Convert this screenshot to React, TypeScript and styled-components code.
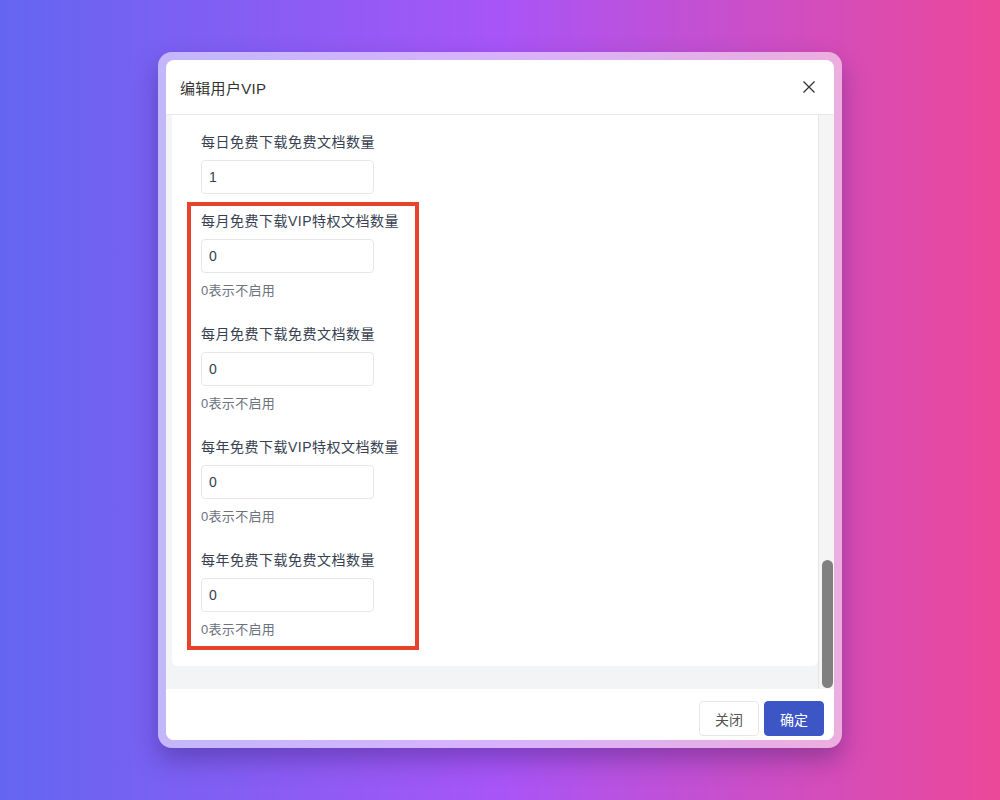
import React from "react";
import styled, { createGlobalStyle } from "styled-components";

const Global = createGlobalStyle`
  html, body { margin: 0; padding: 0; }
  body {
    width: 1000px;
    height: 800px;
    overflow: hidden;
    background: linear-gradient(90deg, #6366f1 0%, #a855f7 50%, #ec4899 100%);
    font-family: "Liberation Sans", "Noto Sans CJK SC", sans-serif;
  }
`;

const Page = styled.div`
  padding: 52px 0 0 158px;
`;

const Frame = styled.div`
  width: 668px;
  height: 680px;
  padding: 8px;
  border-radius: 14px;
  background: rgba(255, 255, 255, 0.55);
  box-shadow: 0 12px 24px rgba(40, 20, 90, 0.35);
`;

const Dialog = styled.div`
  width: 668px;
  height: 680px;
  background: #ffffff;
  border-radius: 8px;
  overflow: hidden;
  display: flex;
  flex-direction: column;
`;

const Header = styled.div`
  height: 54px;
  flex: none;
  display: flex;
  align-items: center;
  justify-content: space-between;
  padding: 0 18px 0 14px;
  border-bottom: 1px solid #e8e8ea;
`;

const Title = styled.div`
  font-size: 15px;
  color: #333333;
  letter-spacing: 0.3px;
`;

const CloseBtn = styled.button`
  width: 12px;
  height: 12px;
  padding: 0;
  border: none;
  background: none;
  display: flex;
  margin-right: 1px;
`;

const Body = styled.div`
  height: 574px;
  flex: none;
  display: flex;
  background: #f3f4f6;
  padding-left: 6px;
`;

const Card = styled.div`
  flex: 1;
  height: 551px;
  background: #ffffff;
  border-radius: 0 0 6px 6px;
  padding: 17px 15px 0 15px;
  box-sizing: border-box;
  overflow: hidden;
`;

const ScrollTrack = styled.div`
  width: 16px;
  flex: none;
  background: #f5f5f5;
  border-left: 1px solid #e6e6e6;
  box-sizing: border-box;
  display: flex;
  flex-direction: column;
  align-items: center;
`;

const ScrollThumb = styled.div`
  margin-top: auto;
  margin-bottom: 1px;
  margin-left: 1px;
  width: 11px;
  height: 128px;
  border-radius: 6px;
  background: #808080;
`;

const Item = styled.div<{ $indent?: boolean; $last?: boolean }>`
  margin-left: ${(p) => (p.$indent ? "14px" : "0")};
  margin-bottom: ${(p) => (p.$last ? "0" : "23px")};
`;

const Label = styled.div`
  font-size: 14px;
  line-height: 20px;
  color: #374151;
  margin-bottom: 8px;
  padding-top: 1px;
  margin-top: -1px;
  letter-spacing: 0.5px;
  white-space: nowrap;
`;

const Input = styled.input`
  display: block;
  width: 173px;
  height: 34px;
  box-sizing: border-box;
  border: 1px solid #e5e7eb;
  border-radius: 4px;
  padding: 0 7px;
  font-family: "Liberation Sans", "Noto Sans CJK SC", sans-serif;
  font-size: 14px;
  color: #374151;
  background: #ffffff;
  outline: none;
`;

const Hint = styled.div`
  margin-top: 8px;
  font-size: 13px;
  line-height: 20px;
  color: #6b7280;
  letter-spacing: 0.3px;
`;

const Highlight = styled.div`
  width: 232px;
  box-sizing: border-box;
  margin-top: 8px;
  border: 4px solid #e8432a;
  padding: 5px 10px 6px 10px;
`;

const Footer = styled.div`
  flex: 1;
  display: flex;
  justify-content: flex-end;
  align-items: flex-start;
  gap: 5px;
  padding: 12px 10px 0 0;
  background: #ffffff;
`;

const Button = styled.button<{ $primary?: boolean }>`
  width: 60px;
  height: 35px;
  border-radius: 4px;
  font-family: "Liberation Sans", "Noto Sans CJK SC", sans-serif;
  font-size: 14px;
  border: 1px solid ${(p) => (p.$primary ? "#3d56c5" : "#e5e7eb")};
  background: ${(p) => (p.$primary ? "#3d56c5" : "#ffffff")};
  color: ${(p) => (p.$primary ? "#ffffff" : "#555555")};
  padding: 0;
`;

const groups = [
  "每月免费下载VIP特权文档数量",
  "每月免费下载免费文档数量",
  "每年免费下载VIP特权文档数量",
  "每年免费下载免费文档数量",
];

export default function App() {
  return (
    <>
      <Global />
      <Page>
        <Frame>
          <Dialog>
            <Header>
              <Title>编辑用户VIP</Title>
              <CloseBtn aria-label="close">
                <svg width="12" height="12" viewBox="0 0 12 12">
                  <path d="M0.5 0.5 L11.5 11.5 M11.5 0.5 L0.5 11.5" stroke="#333" strokeWidth="1.3" fill="none" />
                </svg>
              </CloseBtn>
            </Header>
            <Body>
              <Card>
                <Item $indent $last>
                  <Label>每日免费下载免费文档数量</Label>
                  <Input defaultValue="1" />
                </Item>
                <Highlight>
                  {groups.map((g, i) => (
                    <Item key={g} $last={i === groups.length - 1}>
                      <Label>{g}</Label>
                      <Input defaultValue="0" />
                      <Hint>0表示不启用</Hint>
                    </Item>
                  ))}
                </Highlight>
              </Card>
              <ScrollTrack>
                <ScrollThumb />
              </ScrollTrack>
            </Body>
            <Footer>
              <Button>关闭</Button>
              <Button $primary>确定</Button>
            </Footer>
          </Dialog>
        </Frame>
      </Page>
    </>
  );
}
